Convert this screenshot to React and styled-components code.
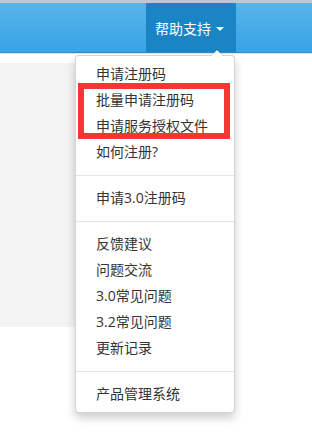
import React from "react";
import styled, { createGlobalStyle } from "styled-components";

const Global = createGlobalStyle`
  html, body { margin: 0; padding: 0; background: #fff; }
  body { font-family: "Open Sans", "Noto Sans CJK SC", sans-serif; width: 312px; height: 448px; overflow: hidden; }
`;

const Page = styled.div`
  position: relative;
  width: 312px;
  height: 448px;
  background: #fff;
`;

const TopStrip = styled.div`
  height: 3px;
  background: #c2c6cd;
`;

const NavBar = styled.div`
  height: 49px;
  border-bottom: 1px solid #2a8dcf;
  background: linear-gradient(to bottom, #56b5ea, #39a3e5);
  display: flex;
  justify-content: flex-end;
  padding-right: 76px;
`;

const NavItem = styled.div`
  position: relative;
  width: 90px;
  height: 100%;
  box-sizing: border-box;
  padding-left: 9px;
  display: flex;
  align-items: center;
  gap: 5px;
  background: ${(p) => (p.$active ? "#1a85c5" : "transparent")};
  color: #fff;
  font-size: 14px;
  font-family: "Noto Sans CJK SC", sans-serif;
`;

const Caret = styled.span`
  display: inline-block;
  width: 0;
  height: 0;
  margin-top: 2px;
  border-left: 4px solid transparent;
  border-right: 4px solid transparent;
  border-top: 4px solid #fff;
`;

const Shade = styled.div`
  height: 1px;
  background: #e2e4e6;
`;

const Content = styled.div`
  padding-top: 9px;
`;

const GrayPanel = styled.div`
  width: 220px;
  height: 264px;
  background: #f3f3f3;
`;

const Menu = styled.div`
  position: absolute;
  top: 55px;
  left: 75px;
  width: 160px;
  box-sizing: border-box;
  padding: 5px 0;
  background: #fff;
  border: 1px solid rgba(0, 0, 0, 0.17);
  border-radius: 4px;
  box-shadow: 0 5px 10px rgba(0, 0, 0, 0.2);
  &::before {
    content: "";
    position: absolute;
    top: -7px;
    left: 134px;
    border-left: 7px solid transparent;
    border-right: 7px solid transparent;
    border-bottom: 7px solid rgba(0, 0, 0, 0.17);
  }
  &::after {
    content: "";
    position: absolute;
    top: -6px;
    left: 135px;
    border-left: 6px solid transparent;
    border-right: 6px solid transparent;
    border-bottom: 6px solid #fff;
  }
`;

const Item = styled.div`
  padding: 3px 20px;
  line-height: 20px;
  font-size: 14px;
  color: #333;
  white-space: nowrap;
  font-family: "Open Sans", "Noto Sans CJK SC", sans-serif;
`;

const Divider = styled.div`
  height: 1px;
  margin: 10px 0 9px;
  background: #e5e5e5;
`;

const Highlight = styled.div`
  position: absolute;
  left: 78px;
  top: 83px;
  width: 152px;
  height: 56px;
  box-sizing: border-box;
  border: 6px solid #f93434;
`;

const groups = [
  ["申请注册码", "批量申请注册码", "申请服务授权文件", "如何注册?"],
  ["申请3.0注册码"],
  ["反馈建议", "问题交流", "3.0常见问题", "3.2常见问题", "更新记录"],
  ["产品管理系统"],
];

export default function App() {
  return (
    <Page>
      <Global />
      <TopStrip />
      <NavBar>
        <NavItem $active>
          帮助支持
          <Caret />
        </NavItem>
      </NavBar>
      <Shade />
      <Content>
        <GrayPanel />
      </Content>
      <Menu>
        {groups.map((g, gi) => (
          <React.Fragment key={gi}>
            {gi > 0 && <Divider />}
            {g.map((t) => (
              <Item key={t}>{t}</Item>
            ))}
          </React.Fragment>
        ))}
      </Menu>
      <Highlight />
    </Page>
  );
}
